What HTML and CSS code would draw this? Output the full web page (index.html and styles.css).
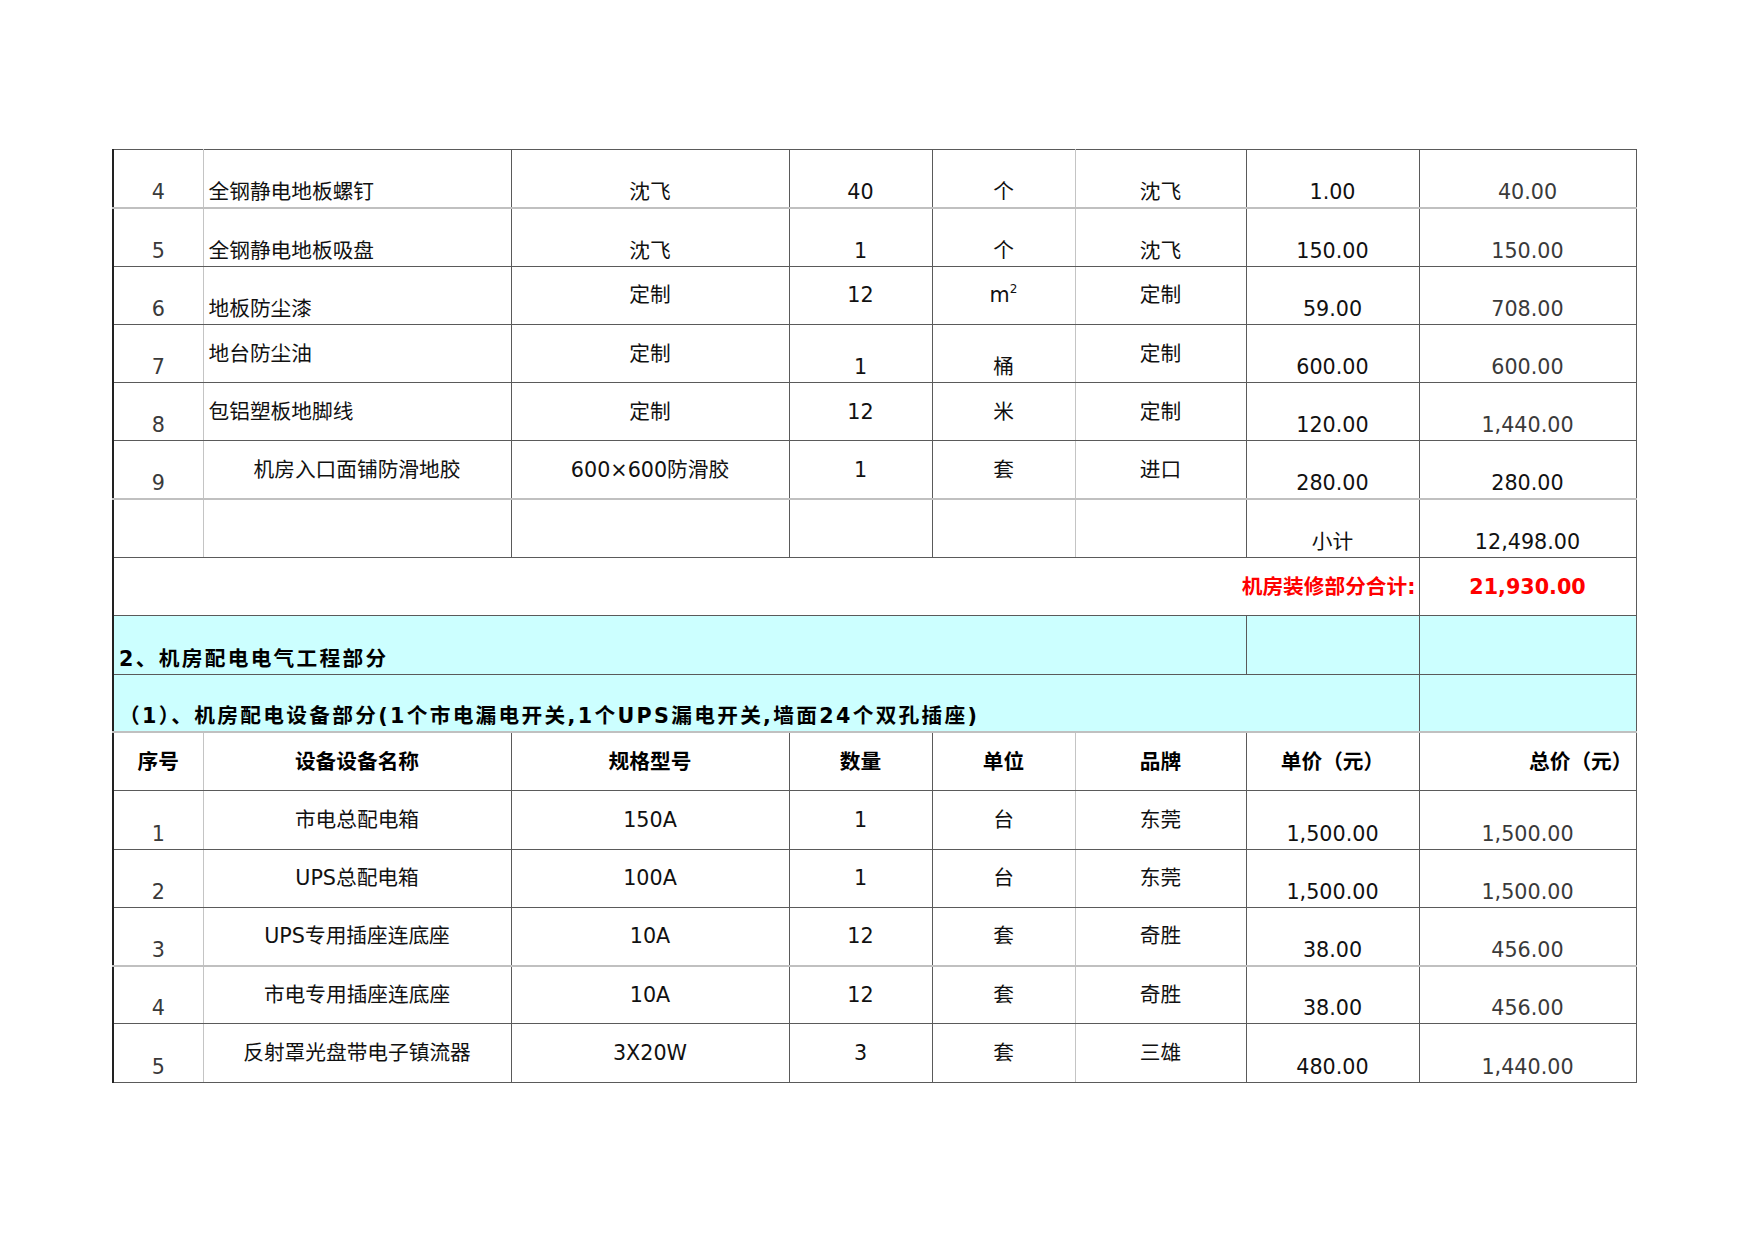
FILE: index.html
```html
<!DOCTYPE html>
<html lang="zh-CN">
<head>
<meta charset="utf-8">
<title>机房报价</title>
<link rel="stylesheet" href="styles.css">
</head>
<body>
<table class="sheet">
  <colgroup>
    <col class="w1"><col class="w2"><col class="w3"><col class="w4">
    <col class="w5"><col class="w6"><col class="w7"><col class="w8">
  </colgroup>
  <tbody>
    <tr class="lightbottom">
      <td class="c1 b seq">4</td><td class="c2 b left">全钢静电地板螺钉</td><td class="b">沈飞</td><td class="b">40</td><td class="c5 b">个</td><td class="b">沈飞</td><td class="b num">1.00</td><td class="b num tot">40.00</td>
    </tr>
    <tr>
      <td class="c1 b seq">5</td><td class="c2 b left">全钢静电地板吸盘</td><td class="b">沈飞</td><td class="b">1</td><td class="c5 b">个</td><td class="b">沈飞</td><td class="b num">150.00</td><td class="b num tot">150.00</td>
    </tr>
    <tr>
      <td class="c1 b seq">6</td><td class="c2 b left">地板防尘漆</td><td class="m">定制</td><td class="m">12</td><td class="c5 m">m<sup>2</sup></td><td class="m">定制</td><td class="b num">59.00</td><td class="b num tot">708.00</td>
    </tr>
    <tr>
      <td class="c1 b seq">7</td><td class="c2 m left">地台防尘油</td><td class="m">定制</td><td class="b">1</td><td class="c5 b">桶</td><td class="m">定制</td><td class="b num">600.00</td><td class="b num tot">600.00</td>
    </tr>
    <tr>
      <td class="c1 b seq">8</td><td class="c2 m left">包铝塑板地脚线</td><td class="m">定制</td><td class="m">12</td><td class="c5 m">米</td><td class="m">定制</td><td class="b num">120.00</td><td class="b num tot">1,440.00</td>
    </tr>
    <tr class="lightbottom">
      <td class="c1 b seq">9</td><td class="c2 m">机房入口面铺防滑地胶</td><td class="m">600×600防滑胶</td><td class="m">1</td><td class="c5 m">套</td><td class="m">进口</td><td class="b num">280.00</td><td class="b num">280.00</td>
    </tr>
    <tr>
      <td class="c1"></td><td class="c2"></td><td></td><td></td><td class="c5"></td><td></td><td class="b">小计</td><td class="b num">12,498.00</td>
    </tr>
    <tr>
      <td colspan="7" class="m right red">机房装修部分合计:</td><td class="m red">21,930.00</td>
    </tr>
    <tr class="cyan">
      <td colspan="6" class="b left strong spaced">2、机房配电电气工程部分</td><td></td><td></td>
    </tr>
    <tr class="cyan lightbottom">
      <td colspan="7" class="b left strong spaced">（1）、机房配电设备部分(1个市电漏电开关,1个UPS漏电开关,墙面24个双孔插座)</td><td></td>
    </tr>
    <tr class="head">
      <td class="c1 m">序号</td><td class="c2 m">设备设备名称</td><td class="m">规格型号</td><td class="m">数量</td><td class="c5 m">单位</td><td class="m">品牌</td><td class="m">单价（元）</td><td class="m right">总价（元）</td>
    </tr>
    <tr>
      <td class="c1 b seq">1</td><td class="c2 m">市电总配电箱</td><td class="m">150A</td><td class="m">1</td><td class="c5 m">台</td><td class="m">东莞</td><td class="b num">1,500.00</td><td class="b num tot">1,500.00</td>
    </tr>
    <tr>
      <td class="c1 b seq">2</td><td class="c2 m">UPS总配电箱</td><td class="m">100A</td><td class="m">1</td><td class="c5 m">台</td><td class="m">东莞</td><td class="b num">1,500.00</td><td class="b num tot">1,500.00</td>
    </tr>
    <tr class="lightbottom">
      <td class="c1 b seq">3</td><td class="c2 m">UPS专用插座连底座</td><td class="m">10A</td><td class="m">12</td><td class="c5 m">套</td><td class="m">奇胜</td><td class="b num">38.00</td><td class="b num tot">456.00</td>
    </tr>
    <tr>
      <td class="c1 b seq">4</td><td class="c2 m">市电专用插座连底座</td><td class="m">10A</td><td class="m">12</td><td class="c5 m">套</td><td class="m">奇胜</td><td class="b num">38.00</td><td class="b num tot">456.00</td>
    </tr>
    <tr>
      <td class="c1 b seq">5</td><td class="c2 m">反射罩光盘带电子镇流器</td><td class="m">3X20W</td><td class="m">3</td><td class="c5 m">套</td><td class="m">三雄</td><td class="b num">480.00</td><td class="b num tot">1,440.00</td>
    </tr>
  </tbody>
</table>
</body>
</html>
```

FILE: styles.css
```css
html, body {
  margin: 0;
  padding: 0;
  background: #ffffff;
}

body {
  font-family: "DejaVu Sans", "Noto Sans CJK SC", sans-serif;
  font-size: 20.7px;
  color: #111111;
}

.sheet {
  margin: 149px 0 0 112px;
  width: 1523px;
  table-layout: fixed;
  border-collapse: collapse;
  border-left: 2px solid #222222;
}

.w1 { width: 90px; }
.w2 { width: 308px; }
.w3 { width: 278px; }
.w4 { width: 143px; }
.w5 { width: 143px; }
.w6 { width: 171px; }
.w7 { width: 173px; }
.w8 { width: 217px; }

.sheet tr {
  height: 58.3px;
}

.sheet td {
  border: 1px solid #5a5a5a;
  padding: 0 4px;
  line-height: 24px;
  text-align: center;
  white-space: nowrap;
  overflow: visible;
}

.sheet td.c1 {
  border-right-color: #c4c4c4;
}

.sheet td.c5 {
  border-right-color: #c4c4c4;
}

.sheet tr.lightbottom td {
  border-bottom: 2px solid #c0c0c0;
}

.sheet td.b {
  vertical-align: bottom;
  padding-bottom: 3px;
}

.sheet td.m {
  vertical-align: middle;
}

.sheet td.left {
  text-align: left;
  padding-left: 5px;
}

.sheet td.right {
  text-align: right;
  padding-right: 3px;
}

.seq {
  color: #3a3a3a;
}

.num {
  color: #111111;
}

.tot {
  color: #3a3a3a;
}

.red {
  color: #ff0000;
  font-weight: bold;
}

.strong {
  font-weight: bold;
  color: #000000;
}

.spaced {
  letter-spacing: 2.3px;
}

.cyan td {
  background: #ccffff;
}

.head td {
  font-weight: bold;
  color: #000000;
}

sup {
  font-size: 12px;
  line-height: 0;
  vertical-align: 9px;
}
```
